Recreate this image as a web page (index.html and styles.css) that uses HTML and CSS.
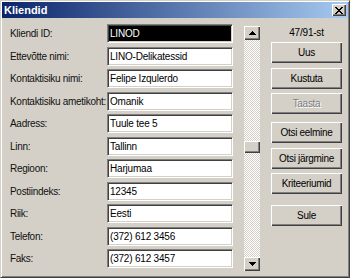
FILE: index.html
```
<!DOCTYPE html>
<html lang="et">
<head>
  <meta charset="UTF-8">
  <title>Kliendid</title>
  <link rel="stylesheet" href="styles.css">
</head>
<body>
  <div class="window">
    <div class="titlebar">
      <span class="title">Kliendid</span>
      <div class="close">
        <svg width="8" height="7" viewBox="0 0 8 7">
          <path d="M0 0h2v1h1v1h2v-1h1v-1h2v1h-1v1h-1v1h-1v1h1v1h1v1h1v1h-2v-1h-1v-1h-2v1h-1v1h-2v-1h1v-1h1v-1h1v-1h-1v-1h-1v-1h-1z" fill="#000"/>
        </svg>
      </div>
    </div>

    <div class="body">
      <div class="form">
        <div class="row"><span class="label">Kliendi ID:</span><div class="field selected">LINOD</div></div>
        <div class="row"><span class="label">Ettevõtte nimi:</span><div class="field">LINO-Delikatessid</div></div>
        <div class="row"><span class="label">Kontaktisiku nimi:</span><div class="field">Felipe Izqulerdo</div></div>
        <div class="row"><span class="label">Kontaktisiku ametikoht:</span><div class="field">Omanik</div></div>
        <div class="row"><span class="label">Aadress:</span><div class="field">Tuule tee 5</div></div>
        <div class="row"><span class="label">Linn:</span><div class="field">Tallinn</div></div>
        <div class="row"><span class="label">Regioon:</span><div class="field">Harjumaa</div></div>
        <div class="row"><span class="label">Postiindeks:</span><div class="field">12345</div></div>
        <div class="row"><span class="label">Riik:</span><div class="field">Eesti</div></div>
        <div class="row"><span class="label">Telefon:</span><div class="field">(372) 612 3456</div></div>
        <div class="row"><span class="label">Faks:</span><div class="field">(372) 612 3457</div></div>
      </div>

      <div class="scrollbar">
        <div class="sb-btn">
          <svg width="7" height="4" viewBox="0 0 7 4"><path d="M3 0h1v1h1v1h1v1h1v1h-7v-1h1v-1h1v-1h1z" fill="#000"/></svg>
        </div>
        <div class="sb-track"><div class="sb-thumb"></div></div>
        <div class="sb-btn">
          <svg width="7" height="4" viewBox="0 0 7 4"><path d="M0 0h7v1h-1v1h-1v1h-1v1h-1v-1h-1v-1h-1v-1h-1z" fill="#000"/></svg>
        </div>
      </div>

      <div class="side">
        <div class="counter">47/91-st</div>
        <div class="btn">Uus</div>
        <div class="btn">Kustuta</div>
        <div class="btn disabled">Taasta</div>
        <div class="btn group">Otsi eelmine</div>
        <div class="btn">Otsi järgmine</div>
        <div class="btn">Kriteeriumid</div>
        <div class="btn last">Sule</div>
      </div>
    </div>
  </div>
</body>
</html>
```

FILE: styles.css
```
body {
  margin: 0;
  font-family: "Liberation Sans", Arial, sans-serif;
  color: #000;
}
.window {
  width: 350px;
  height: 278px;
  box-sizing: border-box;
  background: #d4d0c8;
  border: 1px solid;
  border-color: #d4d0c8 #404040 #404040 #d4d0c8;
  box-shadow: inset 1px 1px #fff, inset -1px -1px #808080;
  padding: 1px;
}
.titlebar {
  height: 16px;
  display: flex;
  align-items: center;
  justify-content: space-between;
  padding: 0 2px 0 2px;
  background: linear-gradient(to right, #0a246a, #a6caf0);
}
.title {
  color: #fff;
  font-size: 11px;
  font-weight: bold;
}
.close {
  width: 14px;
  height: 12px;
  box-sizing: border-box;
  display: flex;
  align-items: center;
  justify-content: center;
  background: #d4d0c8;
  box-shadow: inset 1px 1px #fff, inset -1px -1px #404040, inset -2px -2px #808080;
}
.body {
  display: flex;
  align-items: flex-start;
  padding: 6px 0 0 8px;
}
.form {
  width: 223px;
  display: flex;
  flex-direction: column;
  gap: 3.5px;
}
.row {
  display: flex;
  align-items: center;
  height: 19px;
}
.label {
  width: 97px;
  font-size: 10px;
  letter-spacing: -0.3px;
  white-space: nowrap;
  color: #111;
}
.field {
  width: 126px;
  height: 19px;
  box-sizing: border-box;
  padding: 0 2px;
  background: #fff;
  border: 1px solid;
  border-color: #808080 #fff #fff #808080;
  box-shadow: inset 1px 1px #404040, inset -1px -1px #d4d0c8;
  font-size: 10px;
  letter-spacing: -0.2px;
  line-height: 17px;
  white-space: nowrap;
  overflow: hidden;
}
.field.selected {
  background: #000;
  color: #fff;
}
.scrollbar {
  width: 16px;
  height: 245px;
  margin: 2px 0 0 11px;
  display: flex;
  flex-direction: column;
}
.sb-btn {
  height: 14px;
  box-sizing: border-box;
  display: flex;
  align-items: center;
  justify-content: center;
  background: #d4d0c8;
  box-shadow: inset 1px 1px #fff, inset -1px -1px #404040, inset -2px -2px #808080;
}
.sb-track {
  flex: 1;
  padding-top: 101px;
  background-color: #d4d0c8;
  background-image: conic-gradient(#fff 25%, #d4d0c8 0 50%, #fff 0 75%, #d4d0c8 0);
  background-size: 2px 2px;
}
.sb-thumb {
  height: 12px;
  background: #d4d0c8;
  box-shadow: inset 1px 1px #fff, inset -1px -1px #404040, inset -2px -2px #808080;
}
.side {
  width: 71px;
  margin-left: 11px;
  display: flex;
  flex-direction: column;
}
.counter {
  height: 17px;
  line-height: 17px;
  text-align: center;
  font-size: 10px;
  letter-spacing: -0.2px;
  margin-bottom: 1px;
}
.btn {
  height: 21px;
  line-height: 21px;
  margin-bottom: 4.5px;
  text-align: center;
  font-size: 10px;
  letter-spacing: -0.3px;
  white-space: nowrap;
  background: #d4d0c8;
  box-shadow: inset 1px 1px #fff, inset -1px -1px #404040, inset -2px -2px #808080;
}
.btn.disabled {
  color: #808080;
  text-shadow: 1px 1px #fff;
}
.btn.group {
  margin-top: 3.5px;
}
.btn.last {
  margin-top: 6.5px;
}
```
